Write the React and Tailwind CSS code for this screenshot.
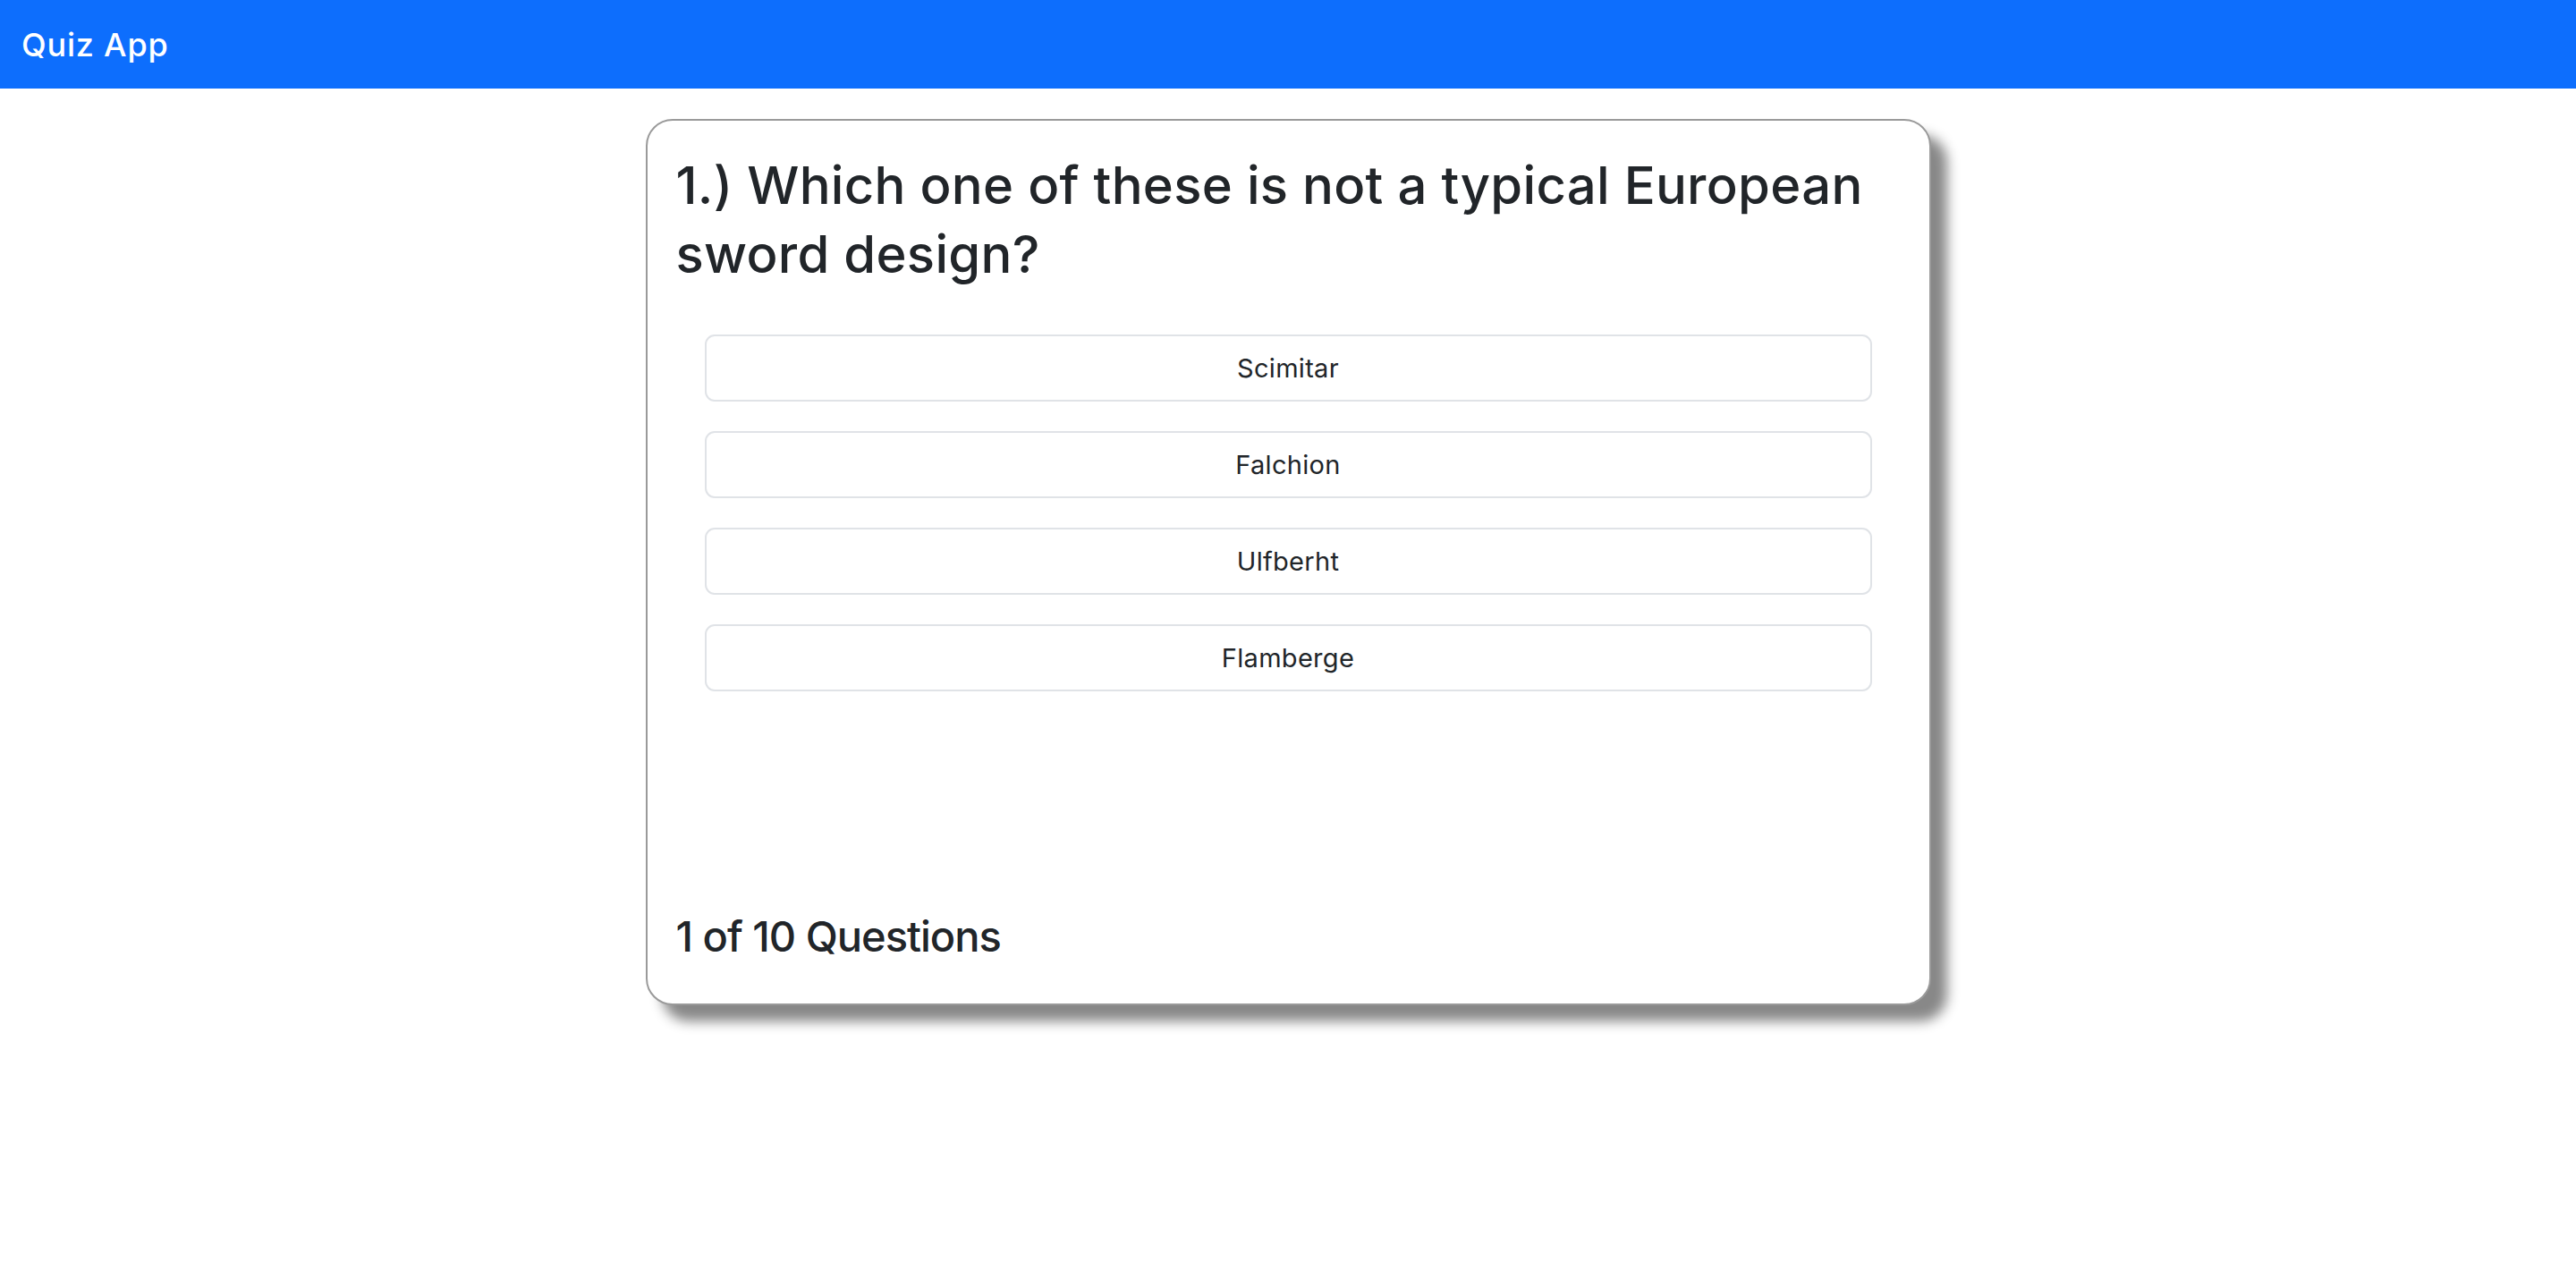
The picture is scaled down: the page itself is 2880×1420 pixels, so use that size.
import React from "react";

const options = ["Scimitar", "Falchion", "Ulfberht", "Flamberge"];

export default function App() {
  return (
    <div className="min-h-screen bg-white text-[#212529] [font-family:Inter,'Noto_Sans',sans-serif]">
      <nav className="h-[99px] bg-[#0d6efd] flex items-center px-[24px]">
        <span className="text-white text-[36px] font-medium leading-none tracking-[0.8px]">Quiz App</span>
      </nav>
      <main className="flex justify-center pt-[34px]">
        <div className="w-[1437px] h-[991px] bg-white border-2 border-[#9a9a9a] rounded-[30px] shadow-[18px_18px_14px_#888] flex flex-col px-[32px] pt-[34px] pb-[46px]">
          <h2 className="text-[58px] leading-[77px] font-medium tracking-[0.3px]">
            1.) Which one of these is not a typical European sword design?
          </h2>
          <div className="flex flex-col gap-[33px] mt-[51px] px-[32px]">
            {options.map((o) => (
              <button
                key={o}
                className="h-[75px] w-full border-2 border-[#e0e3e7] rounded-[11px] bg-white text-[29px] tracking-[0.3px] text-[#212529] flex items-center justify-center"
              >
                {o}
              </button>
            ))}
          </div>
          <h3 className="mt-auto text-[47px] leading-[58px] font-medium tracking-[-1px]">1 of 10 Questions</h3>
        </div>
      </main>
    </div>
  );
}
